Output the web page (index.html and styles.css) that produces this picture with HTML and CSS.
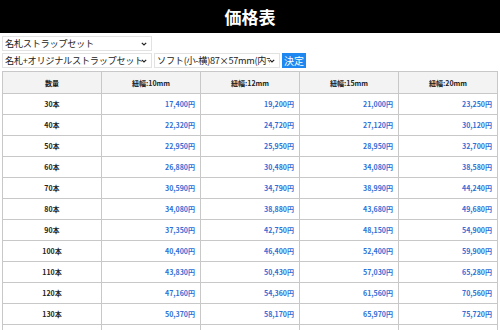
FILE: index.html
```html
<!DOCTYPE html>
<html lang="ja">
<head>
<meta charset="utf-8">
<title>価格表</title>
<link rel="stylesheet" href="styles.css">
</head>
<body>
<header class="top"><h1 class="title">価格表</h1></header>
<div class="controls">
  <div class="ctrl-row">
    <select class="sel sel-a"><option>名札ストラップセット</option></select>
  </div>
  <div class="ctrl-row">
    <select class="sel sel-a"><option>名札+オリジナルストラップセット</option></select>
    <select class="sel sel-b"><option>ソフト(小-横)87×57mm(内寸)</option></select>
    <button class="btn">決定</button>
  </div>
</div>
<table class="price">
  <thead>
    <tr><th>数量</th><th>紐幅:10mm</th><th>紐幅:12mm</th><th>紐幅:15mm</th><th>紐幅:20mm</th></tr>
  </thead>
  <tbody>
    <tr><td class="q">30本</td><td>17,400円</td><td>19,200円</td><td>21,000円</td><td>23,250円</td></tr>
    <tr><td class="q">40本</td><td>22,320円</td><td>24,720円</td><td>27,120円</td><td>30,120円</td></tr>
    <tr><td class="q">50本</td><td>22,950円</td><td>25,950円</td><td>28,950円</td><td>32,700円</td></tr>
    <tr><td class="q">60本</td><td>26,880円</td><td>30,480円</td><td>34,080円</td><td>38,580円</td></tr>
    <tr><td class="q">70本</td><td>30,590円</td><td>34,790円</td><td>38,990円</td><td>44,240円</td></tr>
    <tr><td class="q">80本</td><td>34,080円</td><td>38,880円</td><td>43,680円</td><td>49,680円</td></tr>
    <tr><td class="q">90本</td><td>37,350円</td><td>42,750円</td><td>48,150円</td><td>54,900円</td></tr>
    <tr><td class="q">100本</td><td>40,400円</td><td>46,400円</td><td>52,400円</td><td>59,900円</td></tr>
    <tr><td class="q">110本</td><td>43,830円</td><td>50,430円</td><td>57,030円</td><td>65,280円</td></tr>
    <tr><td class="q">120本</td><td>47,160円</td><td>54,360円</td><td>61,560円</td><td>70,560円</td></tr>
    <tr><td class="q">130本</td><td>50,370円</td><td>58,170円</td><td>65,970円</td><td>75,720円</td></tr>
    <tr class="empty"><td class="q"></td><td></td><td></td><td></td><td></td></tr>
  </tbody>
</table>
</body>
</html>
```
FILE: styles.css
```css
html, body {
  margin: 0;
  padding: 0;
  background: #fff;
  font-family: "Noto Sans CJK JP", "Noto Sans", sans-serif;
  color: #222;
}
.top {
  background: #000;
  height: 33px;
  display: flex;
  align-items: center;
  justify-content: center;
}
.title {
  margin: 0;
  color: #fff;
  font-size: 17px;
  font-weight: bold;
  line-height: 33px;
}
.controls {
  padding: 3px 0 0 2px;
  display: flex;
  flex-direction: column;
  gap: 2px;
}
.ctrl-row {
  display: flex;
  gap: 2px;
  align-items: center;
  height: 15px;
}
.sel {
  -webkit-appearance: none;
  appearance: none;
  box-sizing: border-box;
  height: 15px;
  font-family: "Noto Sans CJK JP", sans-serif;
  font-size: 9.2px;
  letter-spacing: -0.3px;
  color: #222;
  background-color: #fff;
  background-image: url("data:image/svg+xml;utf8,<svg xmlns='http://www.w3.org/2000/svg' width='6' height='4' viewBox='0 0 6 4'><path d='M0.8 0.8 L3 3 L5.2 0.8' fill='none' stroke='%23222' stroke-width='1.2'/></svg>");
  background-repeat: no-repeat;
  background-position: right 4px center;
  border: 1px solid #e2e2e2;
  border-radius: 0;
  padding: 0 9px 0 2px;
  margin: 0;
  line-height: 13px;
  overflow: hidden;
  white-space: nowrap;
}
.sel-a { width: 150px; }
.sel-b { width: 126px; }
.btn {
  box-sizing: border-box;
  height: 15px;
  width: 24px;
  margin: 0;
  padding: 0;
  border: none;
  background: #1e88f0;
  color: #fff;
  font-family: "Noto Sans CJK JP", sans-serif;
  font-size: 10px;
  line-height: 15px;
}
.price {
  margin: 3px 2px 0 2px;
  width: 496px;
  border-collapse: collapse;
  table-layout: fixed;
  font-size: 7px;
}
.price th, .price td {
  border: 1px solid #c8c8c8;
  padding: 0 5px;
}
.price th {
  height: 21px;
  background: #f3f3f3;
  font-weight: bold;
  color: #222;
  text-align: center;
}
.price td {
  height: 20px;
  text-align: right;
  color: #2f6fd6;
  font-weight: bold;
}
.price td.q {
  text-align: center;
  color: #222;
}
```
